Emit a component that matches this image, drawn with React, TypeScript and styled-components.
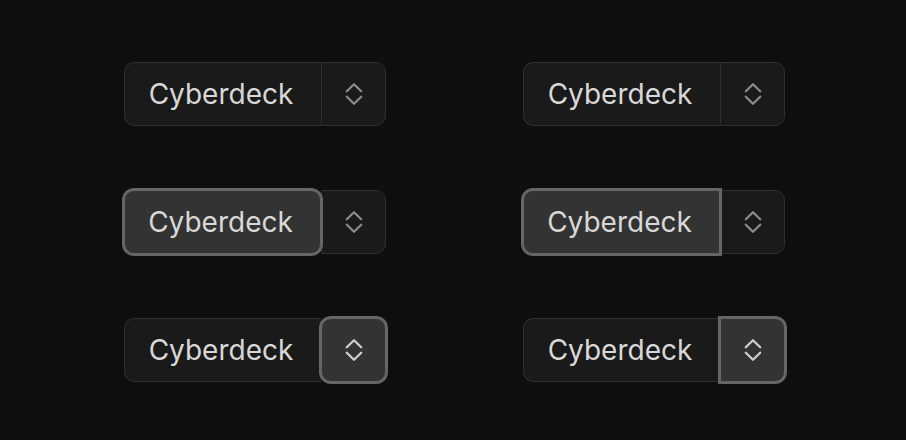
import React from "react";
import styled, { createGlobalStyle, css } from "styled-components";

const Global = createGlobalStyle`
  html, body { margin: 0; padding: 0; background: #0e0e0e; }
  body { font-family: Inter, "Noto Sans", sans-serif; }
`;

const Page = styled.div`
  width: 906px;
  height: 440px;
  box-sizing: border-box;
  padding: 62px 0 0 124px;
  display: grid;
  grid-template-columns: 262px 262px;
  grid-auto-rows: 64px;
  column-gap: 137px;
  row-gap: 64px;
`;

const Group = styled.div`
  display: flex;
  height: 64px;
`;

type SegProps = { $focused?: boolean; $rounded: boolean };

const segBase = css<SegProps>`
  box-sizing: border-box;
  height: 64px;
  display: flex;
  align-items: center;
  justify-content: center;
  border: 1px solid #2f2f2f;
  background: #1a1a1a;
  position: relative;
  ${(p) =>
    p.$focused &&
    css`
      background: #333333;
      border-color: #666666;
      box-shadow: 0 0 0 2px #666666;
      z-index: 1;
    `}
`;

const Label = styled.div<SegProps>`
  ${segBase}
  width: 197px;
  border-right: none;
  border-radius: ${(p) => (p.$focused && p.$rounded ? "10px" : "10px 0 0 10px")};
  font-size: 28px;
  color: #d8d8d8;
  padding: 0 4px 1px 0;
  ${(p) => p.$focused && css`border-right: 1px solid #666666;`}
`;

const Trigger = styled.div<SegProps>`
  ${segBase}
  width: 65px;
  border-radius: ${(p) => (p.$focused && p.$rounded ? "10px" : "0 10px 10px 0")};
  color: ${(p) => (p.$focused ? "#cfcfcf" : "#8a8a8a")};
`;

const Chevrons = () => (
  <svg width="24" height="28" viewBox="0 0 24 28" fill="none" stroke="currentColor" strokeWidth="2.3" strokeLinecap="round" strokeLinejoin="round">
    <path d="M4.8 11.3 12 4.3l7.2 7" />
    <path d="M4.8 16.7l7.2 7 7.2-7" />
  </svg>
);

type Variant = { focus: "none" | "label" | "trigger"; rounded: boolean };

const SplitSelect = ({ focus, rounded }: Variant) => (
  <Group>
    <Label $focused={focus === "label"} $rounded={rounded}>Cyberdeck</Label>
    <Trigger $focused={focus === "trigger"} $rounded={rounded}>
      <Chevrons />
    </Trigger>
  </Group>
);

const variants: Variant[] = [
  { focus: "none", rounded: true },
  { focus: "none", rounded: false },
  { focus: "label", rounded: true },
  { focus: "label", rounded: false },
  { focus: "trigger", rounded: true },
  { focus: "trigger", rounded: false },
];

export default function App() {
  return (
    <>
      <Global />
      <Page>
        {variants.map((v, i) => (
          <SplitSelect key={i} {...v} />
        ))}
      </Page>
    </>
  );
}
